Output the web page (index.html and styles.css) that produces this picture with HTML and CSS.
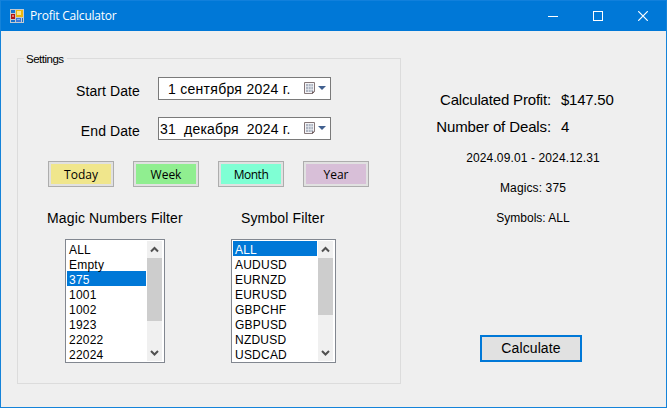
FILE: index.html
```html
<!DOCTYPE html>
<html lang="en">
<head>
<meta charset="utf-8">
<title>Profit Calculator</title>
<link rel="stylesheet" href="styles.css">
</head>
<body>
<div class="window">
  <header class="titlebar">
    <svg class="app-icon" width="14" height="14" viewBox="0 0 14 14" shape-rendering="crispEdges">
      <rect width="14" height="14" fill="#c3c9cf"/>
      <path d="M1 1h4v3H1zM1 11h4v2H1zM12 9h1v4h-1z" fill="#1673cf"/>
      <rect x="1" y="5" width="4" height="5" fill="#b31414"/>
      <rect x="2" y="6" width="2" height="2" fill="#ea7a68"/>
      <rect x="6" y="1" width="7" height="7" fill="#e9b70c"/>
      <rect x="7" y="2" width="4" height="4" fill="#fbe58b"/>
      <rect x="6" y="9" width="5" height="4" fill="#3a78dc"/>
      <rect x="7" y="10" width="3" height="1" fill="#8ab4f2"/>
    </svg>
    <h1 class="title">Profit Calculator</h1>
    <div class="controls">
      <svg width="10" height="10" viewBox="0 0 10 10"><path d="M0 5.5h10" stroke="#fff"/></svg>
      <svg width="10" height="10" viewBox="0 0 10 10"><rect x=".5" y=".5" width="9" height="9" fill="none" stroke="#fff"/></svg>
      <svg width="10" height="10" viewBox="0 0 10 10"><path d="M.2.2l9.6 9.6M9.8.2L.2 9.8" stroke="#fff" stroke-width="1.2"/></svg>
    </div>
  </header>
  <main class="content">
    <section class="settings">
      <h2 class="legend"><span>Settings</span></h2>
      <div class="dates">
        <div class="date-row">
          <label class="date-label start">Start Date</label>
          <div class="date-field"><span class="date-value first">1 сентября 2024 г.</span>
            <svg class="picker" width="22" height="14" viewBox="0 0 22 14"><path d="M.5.5h10v9l-2 2h-8z" fill="#f4f4f6" stroke="#857779"/><path d="M2 2h7v8H2z" fill="#aeb5c2"/><path d="M2 4.500h7M2 7.500h7M4.500 2v8M7 2v8" stroke="#e6e9ef" stroke-width=".7"/><path d="M8 12v-2.500h3z" fill="#6d5a5c"/><path d="M14 4h8l-4 4z" fill="#41608f"/></svg>
          </div>
        </div>
        <div class="date-row">
          <label class="date-label end">End Date</label>
          <div class="date-field"><span class="date-value second">31&nbsp; декабря&nbsp; 2024 г.</span>
            <svg class="picker" width="22" height="14" viewBox="0 0 22 14"><path d="M.5.5h10v9l-2 2h-8z" fill="#f4f4f6" stroke="#857779"/><path d="M2 2h7v8H2z" fill="#aeb5c2"/><path d="M2 4.500h7M2 7.500h7M4.500 2v8M7 2v8" stroke="#e6e9ef" stroke-width=".7"/><path d="M8 12v-2.500h3z" fill="#6d5a5c"/><path d="M14 4h8l-4 4z" fill="#41608f"/></svg>
          </div>
        </div>
      </div>
      <div class="ranges">
        <button class="range today">Today</button>
        <button class="range week">Week</button>
        <button class="range month">Month</button>
        <button class="range year">Year</button>
      </div>
      <div class="filters">
        <div class="filter magic">
          <h3 class="filter-title">Magic Numbers Filter</h3>
          <div class="listbox">
            <ul class="items"><li>ALL</li><li>Empty</li><li class="selected">375</li><li>1001</li><li>1002</li><li>1923</li><li>22022</li><li>22024</li></ul>
            <div class="scrollbar">
              <svg width="15" height="17" viewBox="0 0 15 17"><path d="M4 10.500l3.500-3.500 3.500 3.500" fill="none" stroke="#505050" stroke-width="2"/></svg>
              <div class="thumb"></div>
              <svg class="down" width="15" height="17" viewBox="0 0 15 17"><path d="M4 7l3.500 3.500L11 7" fill="none" stroke="#505050" stroke-width="2"/></svg>
            </div>
          </div>
        </div>
        <div class="filter symbol">
          <h3 class="filter-title">Symbol Filter</h3>
          <div class="listbox">
            <ul class="items"><li class="selected">ALL</li><li>AUDUSD</li><li>EURNZD</li><li>EURUSD</li><li>GBPCHF</li><li>GBPUSD</li><li>NZDUSD</li><li>USDCAD</li></ul>
            <div class="scrollbar">
              <svg width="15" height="17" viewBox="0 0 15 17"><path d="M4 10.500l3.500-3.500 3.500 3.500" fill="none" stroke="#505050" stroke-width="2"/></svg>
              <div class="thumb"></div>
              <svg class="down" width="15" height="17" viewBox="0 0 15 17"><path d="M4 7l3.500 3.500L11 7" fill="none" stroke="#505050" stroke-width="2"/></svg>
            </div>
          </div>
        </div>
      </div>
    </section>
    <section class="results">
      <dl class="totals">
        <dt class="profit">Calculated Profit:</dt><dd class="amount">$147.50</dd>
        <dt class="deals">Number of Deals:</dt><dd>4</dd>
      </dl>
      <p class="note period">2024.09.01 - 2024.12.31</p>
      <p class="note magics">Magics: 375</p>
      <p class="note symbols">Symbols: ALL</p>
      <button class="calculate">Calculate</button>
    </section>
  </main>
</div>
</body>
</html>
```
FILE: styles.css
```css
* { box-sizing: border-box; margin: 0; padding: 0; }
body { width: 667px; height: 408px; overflow: hidden; font-family: "Liberation Sans", Arial, sans-serif; color: #000; }
svg { display: block; flex: none; }
h1, h2, h3 { font-weight: normal; }
button { font: inherit; color: inherit; }
.window { width: 667px; height: 408px; background: #efefef; border: 1px solid #1583d9; border-top-color: #1180dc; display: flex; flex-direction: column; }
.titlebar { height: 30px; flex: none; background: #0078d7; display: flex; align-items: center; padding: 0 18px 0 9px; color: #fff; }
.title { margin-left: 6px; font: 12px/16px "Open Sans", "Noto Sans", sans-serif; letter-spacing: -0.22px; white-space: nowrap; }
.controls { display: flex; gap: 35px; margin-left: auto; }
.content { flex: 1; display: flex; }
.settings { width: 384px; height: 326px; margin: 27px 0 0 16px; border: 1px solid #dcdcdc; flex: none; }
.legend { height: 16px; margin: -8px 0 0 6px; font-size: 11.5px; line-height: 16px; letter-spacing: -0.5px; }
.legend span { display: inline-block; background: #efefef; padding: 0 3px 0 2px; }
.dates { display: flex; flex-direction: column; gap: 17px; margin-top: 10px; }
.date-row { display: flex; height: 23px; }
.date-label { width: 122px; text-align: right; font-size: 14px; line-height: 28px; letter-spacing: 0.1px; white-space: nowrap; }
.date-field { width: 173px; margin-left: 18px; border: 1px solid #7a7a7a; background: #fff; display: flex; align-items: flex-start; }
.date-value { font-size: 14px; line-height: 22px; white-space: nowrap; width: 145px; }
.date-value.first { padding-left: 9px; letter-spacing: 0.28px; }
.date-value.second { padding-left: 1px; letter-spacing: 0.18px; }
.picker { margin-top: 4px; }
.ranges { display: flex; gap: 19px; margin: 21px 0 0 30px; }
.range { width: 66px; height: 26px; border: 1px solid #adadad; box-shadow: inset 0 0 0 2px #e1e1e1; font: 12px/24px "Open Sans", "Noto Sans", sans-serif; text-align: center; padding-top: 1px; }
.today { background: #f0e68c; }
.week { background: #90ee90; }
.month { background: #7fffd4; letter-spacing: -0.5px; }
.year { background: #d8bfd8; }
.filters { display: flex; margin-top: 21px; }
.filter-title { font-size: 14px; line-height: 20px; letter-spacing: 0.14px; white-space: nowrap; }
.magic { width: 180px; padding-left: 29px; }
.magic .listbox { width: 100px; margin-left: 18px; }
.symbol { padding-left: 33px; }
.symbol .filter-title { margin-left: 10px; }
.symbol .listbox { width: 105px; }
.listbox { height: 124px; margin-top: 11px; border: 1px solid #828790; background: #fff; padding: 1px 2px 1px 1px; display: flex; }
.items { list-style: none; flex: 1; font-size: 12px; line-height: 19px; letter-spacing: 0.22px; height: 120px; overflow: hidden; }
.items li { height: 15px; padding-left: 2px; }
.selected { background: #0078d7; color: #fff; }
.scrollbar { width: 15px; margin-left: 1px; background: #f0f0f0; display: flex; flex-direction: column; }
.thumb { height: 63px; background: #cdcdcd; }
.symbol .thumb { height: 57px; }
.down { margin-top: auto; }
.results { flex: 1; display: flex; flex-direction: column; align-items: flex-start; padding-top: 55px; }
.totals { display: grid; grid-template-columns: 150px auto; column-gap: 10px; grid-auto-rows: 27px; font-size: 15px; line-height: 27px; white-space: nowrap; }
.totals dt { text-align: right; }
.profit { letter-spacing: -0.18px; }
.amount { letter-spacing: -0.25px; }
.deals { letter-spacing: -0.12px; }
.note { width: 264px; text-align: center; font-size: 12px; line-height: 32px; height: 30px; letter-spacing: 0.12px; }
.period { margin-top: 2px; }
.symbols { letter-spacing: 0; }
.calculate { width: 102px; height: 27px; margin: 103px 0 0 79px; border: 2px solid #0078d7; background: #e1e1e1; font-size: 14px; line-height: 23px; letter-spacing: 0.1px; }
```
